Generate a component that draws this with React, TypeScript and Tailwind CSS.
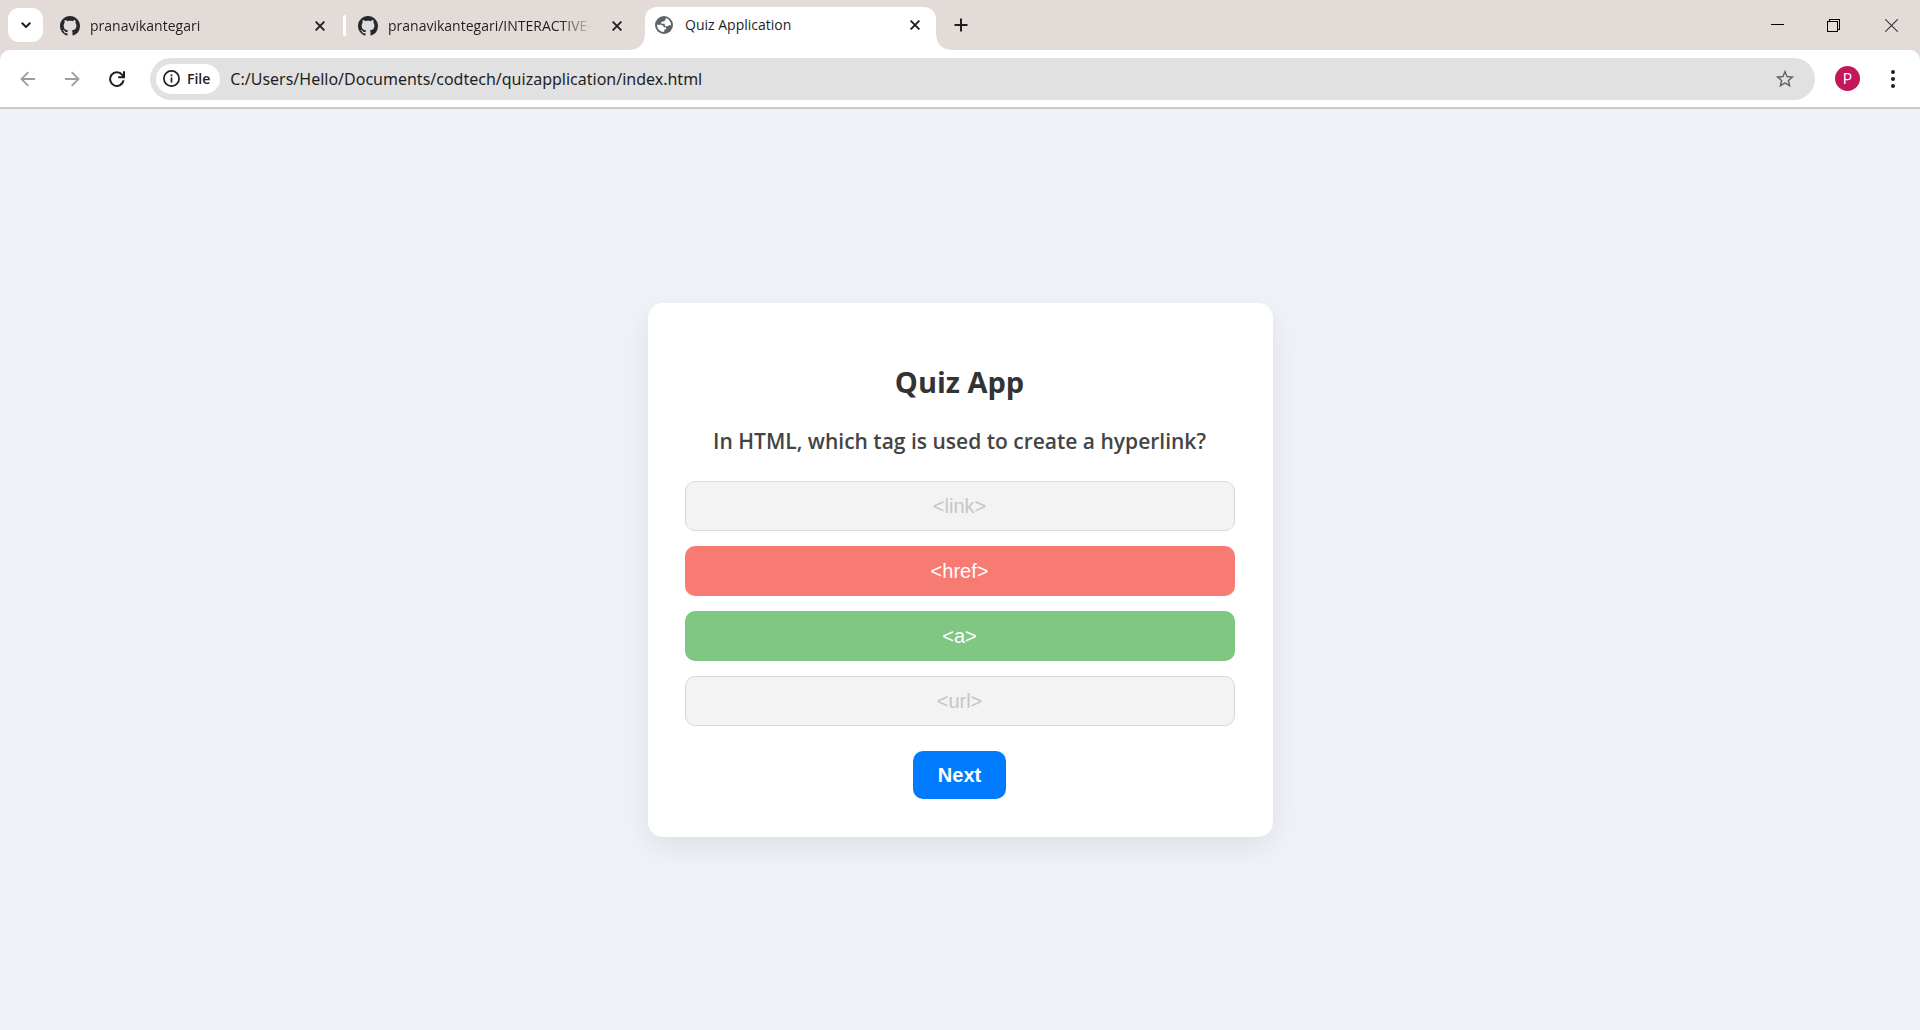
import { useState } from "react";
import type { ReactNode } from "react";

const GITHUB =
  "M8 0C3.58 0 0 3.58 0 8c0 3.54 2.29 6.53 5.47 7.59.4.07.55-.17.55-.38 0-.19-.01-.82-.01-1.49-2.01.37-2.53-.49-2.69-.94-.09-.23-.48-.94-.82-1.13-.28-.15-.68-.52-.01-.53.63-.01 1.08.58 1.23.82.72 1.21 1.87.87 2.33.66.07-.52.28-.87.51-1.07-1.78-.2-3.64-.89-3.64-3.95 0-.87.31-1.59.82-2.15-.08-.2-.36-1.02.08-2.12 0 0 .67-.21 2.2.82.64-.18 1.32-.27 2-.27s1.36.09 2 .27c1.53-1.04 2.2-.82 2.2-.82.44 1.1.16 1.92.08 2.12.51.56.82 1.27.82 2.15 0 3.07-1.87 3.75-3.65 3.95.29.25.54.73.54 1.48 0 1.07-.01 1.93-.01 2.2 0 .21.15.46.55.38A8.01 8.01 0 0 0 16 8c0-4.42-3.58-8-8-8z";

function GithubIcon() {
  return (
    <svg viewBox="0 0 16 16" className="size-5 shrink-0 fill-[#24292f]" aria-hidden="true">
      <path d={GITHUB} />
    </svg>
  );
}

function GlobeIcon() {
  return (
    <svg viewBox="0 0 18 18" className="size-[18px] shrink-0" aria-hidden="true">
      <circle cx="9" cy="9" r="9" fill="#5f6368" />
      <path
        d="M10.8 2.1 A7.1 7.1 0 0 1 16.1 9.6 C14.8 8.6 13.7 8.9 13.2 10.1 C12 10.6 10 10.4 9.8 9.4 V7.7 H6.6 C5.6 6.4 6.4 5.6 8.4 5.6 C9.7 5.6 9.2 4.3 10.1 3.9 C10.9 3.6 10.8 2.9 10.8 2.1 Z M2 8.7 H5.4 C7.4 8.7 8.7 9.6 8.7 11.3 H10.6 C11.8 12 11.4 13.8 9.2 13.8 V16 A7.1 7.1 0 0 1 2 8.7 Z"
        fill="#fff"
      />
    </svg>
  );
}

function CloseButton({ label }: { label: string }) {
  return (
    <button aria-label={label} className="grid size-5 shrink-0 place-items-center">
      <svg viewBox="0 0 10 10" className="size-[10px]" fill="none" stroke="#1f1f1f" strokeWidth="1.9">
        <path d="M0.6 0.6 9.4 9.4M9.4 0.6 0.6 9.4" />
      </svg>
    </button>
  );
}

function Tab({ icon, title, active, className }: { icon: ReactNode; title: string; active?: boolean; className: string }) {
  return (
    <div
      role="tab"
      aria-selected={!!active}
      className={`flex items-center text-sm text-[#1f1f1f] ${className} ${
        active ? "relative h-[43px] gap-3 self-end rounded-t-xl bg-white pr-[11px] pb-[8px] pl-[10px]" : "h-8 gap-[10px] pt-px pr-[10px] pl-3"
      }`}
    >
      {active && (
        <>
          <span className="absolute bottom-0 -left-[14px] size-[14px] bg-[radial-gradient(circle_at_0_0,transparent_13px,#fff_14px)]" />
          <span className="absolute -right-[14px] bottom-0 size-[14px] bg-[radial-gradient(circle_at_100%_0,transparent_13px,#fff_14px)]" />
        </>
      )}
      {icon}
      <span
        className={`min-w-0 flex-1 overflow-hidden whitespace-nowrap ${
          active ? "" : "[mask-image:linear-gradient(to_right,#000_calc(100%-36px),transparent_calc(100%-4px))]"
        }`}
      >
        {title}
      </span>
      <CloseButton label={`Close ${title}`} />
    </div>
  );
}

function TabStrip() {
  return (
    <div className="flex h-[50px] items-center bg-[#e3dbd8]">
      <button aria-label="Search tabs" className="ml-2 grid h-[34px] w-[35px] shrink-0 place-items-center rounded-[11px] bg-white">
        <svg viewBox="0 0 10 6" className="h-[6px] w-[10px]" fill="none" stroke="#1f1f1f" strokeWidth="2">
          <path d="M0.7 0.7 5 5 9.3 0.7" />
        </svg>
      </button>
      <div role="tablist" className="flex min-w-0 items-center self-stretch">
        <Tab icon={<GithubIcon />} title="pranavikantegari" className="ml-[5px] w-[292px]" />
        <span className="ml-[3px] h-[21px] w-[3px] shrink-0 rounded-full bg-white" />
        <Tab icon={<GithubIcon />} title="pranavikantegari/INTERACTIVE-" className="w-[291px]" />
        <Tab icon={<GlobeIcon />} title="Quiz Application" active className="ml-[8px] w-[291px]" />
      </div>
      <button aria-label="New tab" className="ml-[11px] grid size-7 shrink-0 place-items-center">
        <svg viewBox="0 0 14 14" className="size-[14px]" stroke="#1f1f1f" strokeWidth="2">
          <path d="M7 0.5V13.5M0.5 7H13.5" />
        </svg>
      </button>
      <div className="ml-auto flex shrink-0 self-stretch">
        <button aria-label="Minimize" className="grid w-[54px] place-items-center">
          <svg viewBox="0 0 13 13" className="size-[13px]" stroke="#000" shapeRendering="crispEdges">
            <path d="M0 5.5H13" />
          </svg>
        </button>
        <button aria-label="Restore" className="grid w-[58px] place-items-center">
          <svg viewBox="0 0 13 13" className="size-[13px]" fill="none" stroke="#000" shapeRendering="crispEdges">
            <path d="M0.5 2.5H10.5V12.5H0.5ZM2.5 2.5V0.5H12.5V10.5H10.5" />
          </svg>
        </button>
        <button aria-label="Close window" className="grid w-[58px] place-items-center">
          <svg viewBox="0 0 13 13" className="size-[13px]" stroke="#333" strokeWidth="1.1">
            <path d="M0.3 0.3 12.7 12.7M12.7 0.3 0.3 12.7" />
          </svg>
        </button>
      </div>
    </div>
  );
}

function Toolbar() {
  const [url, setUrl] = useState("C:/Users/Hello/Documents/codtech/quizapplication/index.html");
  return (
    <div className="bg-[#e3dbd8]">
      <div className="flex h-[59px] items-center rounded-t-[10px] border-b-2 border-[#c9c9c9] bg-white">
        <button aria-label="Back" className="ml-[14px] grid size-7 place-items-center">
          <svg viewBox="0 0 16 16" className="size-4" fill="none" stroke="#9e9e9e" strokeWidth="1.8">
            <path d="M15 8H1.8M8.3 1.2 1.5 8 8.3 14.8" />
          </svg>
        </button>
        <button aria-label="Forward" className="ml-[16px] grid size-7 place-items-center">
          <svg viewBox="0 0 16 16" className="size-4" fill="none" stroke="#9e9e9e" strokeWidth="1.8">
            <path d="M1 8H14.2M7.7 1.2 14.5 8 7.7 14.8" />
          </svg>
        </button>
        <button aria-label="Reload" className="ml-[17px] grid size-7 place-items-center">
          <svg viewBox="0 0 16 16" className="size-4" fill="none" stroke="#1f1f1f" strokeWidth="2">
            <path d="M14.6 9.3A6.8 6.8 0 1 1 13.2 3.8L14.6 5.6M15 0.3V6.2H9.2" />
          </svg>
        </button>
        <div className="ml-[19px] flex h-[42px] min-w-0 flex-1 items-center rounded-full bg-[#e1e1e1] pr-[18px] pl-[6px]">
          <button className="flex h-[30px] shrink-0 items-center gap-[7px] rounded-full bg-white pr-[10px] pl-[7px] text-sm font-semibold text-[#1f1f1f]">
            <svg viewBox="0 0 17 17" className="size-[17px]" fill="none" stroke="#1f1f1f" strokeWidth="1.7">
              <circle cx="8.5" cy="8.5" r="7.6" />
              <path d="M8.5 7.5V12.5M8.5 4.5V6.2" />
            </svg>
            File
          </button>
          <input
            aria-label="Address"
            value={url}
            onChange={(e) => setUrl(e.target.value)}
            className="ml-[10px] min-w-0 flex-1 bg-transparent font-['Noto_Sans','Open_Sans',sans-serif] text-base text-[#1f1f1f] outline-none"
          />
          <button aria-label="Bookmark this page" className="grid size-6 place-items-center">
            <svg viewBox="0 0 24 24" className="size-[22px] fill-[#5f6368]">
              <path d="M22 9.24l-7.19-.62L12 2 9.19 8.63 2 9.24l5.46 4.73L5.82 21 12 17.27 18.18 21l-1.63-7.03L22 9.24zM12 15.4l-3.76 2.27 1-4.28-3.32-2.88 4.38-.38L12 6.1l1.71 4.04 4.38.38-3.32 2.88 1 4.28L12 15.4z" />
            </svg>
          </button>
        </div>
        <button
          aria-label="Profile"
          className="ml-[20px] grid size-[25px] shrink-0 place-items-center rounded-full bg-[#c2185b] font-[Roboto,sans-serif] text-sm text-white"
        >
          P
        </button>
        <button aria-label="Menu" className="mr-[13px] ml-[19px] grid size-7 shrink-0 place-items-center">
          <svg viewBox="0 0 4 18" className="h-[18px] w-1 fill-[#1f1f1f]">
            <circle cx="2" cy="2" r="2" />
            <circle cx="2" cy="9" r="2" />
            <circle cx="2" cy="16" r="2" />
          </svg>
        </button>
      </div>
    </div>
  );
}

const options = [
  { text: "<link>", look: "border border-[#dadada] bg-[#f3f3f3] text-[#c6c6c6]" },
  { text: "<href>", look: "bg-[#f87b73] text-white" },
  { text: "<a>", look: "bg-[#81c784] text-white" },
  { text: "<url>", look: "border border-[#dadada] bg-[#f3f3f3] text-[#c6c6c6]" },
];

function Quiz() {
  return (
    <section className="w-[625px] max-w-full rounded-[15px] bg-white pt-[59px] pr-[38px] pb-[38px] pl-[37px] text-center shadow-[0_10px_31px_rgba(0,0,0,0.08)]">
      <h2 className="text-[29px] leading-10 font-bold text-[#333]">Quiz App</h2>
      <p className="mt-[22px] text-[21px] leading-[34px] font-semibold text-[#444]">
        In HTML, which tag is used to create a hyperlink?
      </p>
      <div className="mt-[23px] flex flex-col gap-[15px] font-['Liberation_Sans',Arial,sans-serif] text-xl">
        {options.map((o) => (
          <button key={o.text} disabled className={`h-[50px] rounded-[10px] ${o.look}`}>
            {o.text}
          </button>
        ))}
      </div>
      <button className="mt-[25px] h-12 rounded-[10px] bg-[#007bff] px-[25px] font-['Liberation_Sans',Arial,sans-serif] text-xl font-bold text-white">
        Next
      </button>
    </section>
  );
}

export default function App() {
  return (
    <div className="flex min-h-screen flex-col bg-[#eff3f8] font-['Open_Sans','Noto_Sans',sans-serif]">
      <header>
        <TabStrip />
        <Toolbar />
      </header>
      <main className="flex flex-1 items-center justify-center">
        <Quiz />
      </main>
    </div>
  );
}
